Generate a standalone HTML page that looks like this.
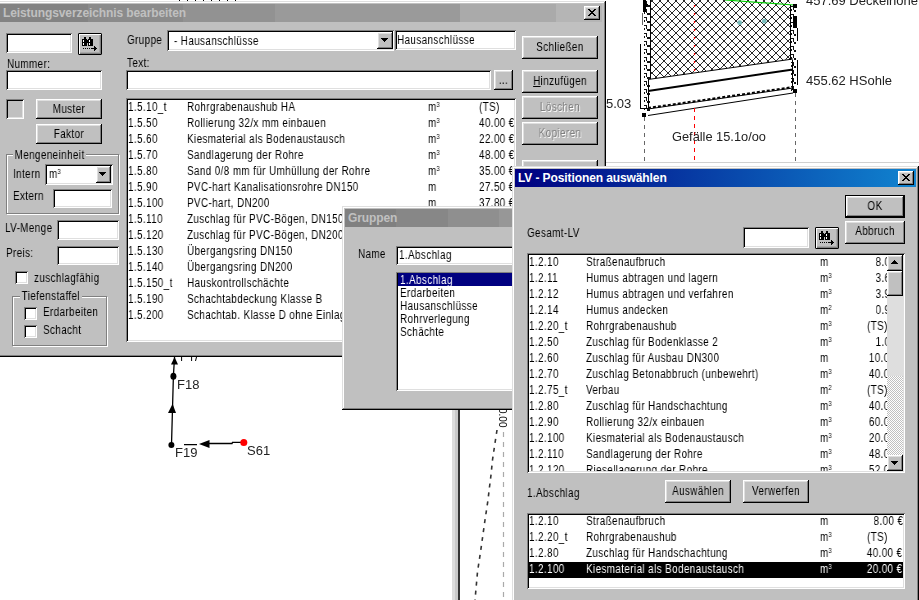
<!DOCTYPE html><html><head><meta charset="utf-8"><style>
*{margin:0;padding:0;box-sizing:border-box}
html,body{width:919px;height:600px;overflow:hidden;background:#fff}
body{position:relative;font-family:"Liberation Sans",sans-serif;font-size:11px;color:#000}
.a{position:absolute}
.t{position:absolute;white-space:pre;line-height:13px;font-size:12px;letter-spacing:0.5px;transform:scaleX(0.82);transform-origin:0 0;will-change:transform;color:#000}
.win{position:absolute;background:#c0c0c0;box-shadow:inset -1px -1px #000,inset 1px 1px #dfdfdf,inset -2px -2px #808080,inset 2px 2px #fff}
.sunk{position:absolute;background:#fff;box-shadow:inset 1px 1px #808080,inset -1px -1px #fff,inset 2px 2px #000,inset -2px -2px #dfdfdf}
.btn{position:absolute;background:#c0c0c0;box-shadow:inset -1px -1px #000,inset 1px 1px #fff,inset -2px -2px #808080,inset 2px 2px #dfdfdf}
.dbtn{position:absolute;background:#c0c0c0;border:1px solid #000;box-shadow:inset -1px -1px #000,inset 1px 1px #fff,inset -2px -2px #808080,inset 2px 2px #dfdfdf}
.cb{position:absolute;width:13px;height:13px;background:#fff;box-shadow:inset 1px 1px #808080,inset -1px -1px #fff,inset 2px 2px #000,inset -2px -2px #dfdfdf}
.grp{position:absolute;border:1px solid #808080;box-shadow:inset 1px 1px #fff,1px 1px #fff}
.ttl{position:absolute;height:18px;font-weight:bold;font-size:12px;line-height:18px;white-space:pre;letter-spacing:-0.1px;padding-left:3px;overflow:hidden}
.inact{color:#c0c0c0}
.act{color:#fff}
.cls{position:absolute;width:16px;height:14px;background:#c0c0c0;box-shadow:inset -1px -1px #000,inset 1px 1px #fff,inset -2px -2px #808080,inset 2px 2px #dfdfdf}
.dis{color:#808080;text-shadow:1px 1px #fff}
.lb{position:absolute;overflow:hidden}
.c{text-align:center;transform-origin:50% 0}
.s{font-size:7px;position:relative;top:-4px;margin-left:-0.3px}
</style></head><body><svg class="a" style="left:0;top:0" width="919" height="600"><defs><pattern id="hx" patternUnits="userSpaceOnUse" x="4" y="9" width="8" height="8"><g fill="#2a2a2a" shape-rendering="crispEdges"><rect x="0" y="0" width="1" height="1"/><rect x="7" y="0" width="1" height="1"/><rect x="1" y="1" width="1" height="1"/><rect x="6" y="1" width="1" height="1"/><rect x="2" y="2" width="1" height="1"/><rect x="5" y="2" width="1" height="1"/><rect x="3" y="3" width="1" height="1"/><rect x="4" y="3" width="1" height="1"/><rect x="4" y="4" width="1" height="1"/><rect x="3" y="4" width="1" height="1"/><rect x="5" y="5" width="1" height="1"/><rect x="2" y="5" width="1" height="1"/><rect x="6" y="6" width="1" height="1"/><rect x="1" y="6" width="1" height="1"/><rect x="7" y="7" width="1" height="1"/><rect x="0" y="7" width="1" height="1"/></g></pattern></defs><rect x="179" y="0" width="1" height="2" fill="#000"/><rect x="187" y="0" width="1" height="2" fill="#000"/><rect x="195" y="0" width="1" height="2" fill="#000"/><rect x="203" y="0" width="1" height="2" fill="#000"/><rect x="211" y="0" width="1" height="2" fill="#000"/><rect x="219" y="0" width="1" height="2" fill="#000"/><rect x="227" y="0" width="1" height="2" fill="#000"/><rect x="235" y="0" width="1" height="2" fill="#000"/><polygon points="650,0 790,0 790,59 650,79" fill="url(#hx)"/><line x1="725" y1="0" x2="794" y2="5" stroke="#0c0" stroke-width="1.2"/><line x1="648" y1="79.5" x2="793" y2="59" stroke="#000" stroke-width="1"/><line x1="648" y1="91" x2="793" y2="69.5" stroke="#000" stroke-width="2"/><line x1="648" y1="108" x2="793" y2="87" stroke="#000" stroke-width="2" stroke-dasharray="3,2"/><line x1="648" y1="109" x2="793" y2="88" stroke="#000" stroke-width="1"/><line x1="648" y1="115.5" x2="793" y2="93" stroke="#000" stroke-width="1"/><g fill="#111" shape-rendering="crispEdges"><rect x="644" y="1" width="3" height="1"/><rect x="646" y="2" width="1" height="3"/><rect x="644" y="4" width="1" height="2"/><rect x="647" y="5" width="3" height="2"/><rect x="644" y="9" width="3" height="1"/><rect x="646" y="10" width="1" height="3"/><rect x="644" y="12" width="1" height="2"/><rect x="647" y="13" width="3" height="2"/><rect x="644" y="17" width="3" height="1"/><rect x="646" y="18" width="1" height="3"/><rect x="644" y="20" width="1" height="2"/><rect x="647" y="21" width="3" height="2"/><rect x="644" y="25" width="3" height="1"/><rect x="646" y="26" width="1" height="3"/><rect x="644" y="28" width="1" height="2"/><rect x="647" y="29" width="3" height="2"/><rect x="644" y="33" width="3" height="1"/><rect x="646" y="34" width="1" height="3"/><rect x="644" y="36" width="1" height="2"/><rect x="647" y="37" width="3" height="2"/><rect x="644" y="41" width="3" height="1"/><rect x="646" y="42" width="1" height="3"/><rect x="644" y="44" width="1" height="2"/><rect x="647" y="45" width="3" height="2"/><rect x="644" y="49" width="3" height="1"/><rect x="646" y="50" width="1" height="3"/><rect x="644" y="52" width="1" height="2"/><rect x="647" y="53" width="3" height="2"/><rect x="644" y="57" width="3" height="1"/><rect x="646" y="58" width="1" height="3"/><rect x="644" y="60" width="1" height="2"/><rect x="647" y="61" width="3" height="2"/><rect x="644" y="65" width="3" height="1"/><rect x="646" y="66" width="1" height="3"/><rect x="644" y="68" width="1" height="2"/><rect x="647" y="69" width="3" height="2"/><rect x="644" y="73" width="3" height="1"/><rect x="646" y="74" width="1" height="3"/><rect x="644" y="76" width="1" height="2"/><rect x="647" y="77" width="3" height="2"/><rect x="644" y="81" width="3" height="1"/><rect x="646" y="82" width="1" height="3"/><rect x="644" y="84" width="1" height="2"/><rect x="647" y="85" width="3" height="2"/><rect x="644" y="89" width="3" height="1"/><rect x="646" y="90" width="1" height="3"/><rect x="644" y="92" width="1" height="2"/><rect x="647" y="93" width="3" height="2"/><rect x="644" y="97" width="3" height="1"/><rect x="646" y="98" width="1" height="3"/><rect x="644" y="100" width="1" height="2"/><rect x="647" y="101" width="3" height="2"/><rect x="644" y="105" width="3" height="1"/><rect x="646" y="106" width="1" height="3"/><rect x="644" y="108" width="1" height="2"/><rect x="647" y="109" width="3" height="2"/><rect x="791" y="6" width="3" height="1"/><rect x="793" y="7" width="1" height="3"/><rect x="791" y="9" width="1" height="2"/><rect x="794" y="10" width="2" height="2"/><rect x="791" y="14" width="3" height="1"/><rect x="793" y="15" width="1" height="3"/><rect x="791" y="17" width="1" height="2"/><rect x="794" y="18" width="2" height="2"/><rect x="791" y="22" width="3" height="1"/><rect x="793" y="23" width="1" height="3"/><rect x="791" y="25" width="1" height="2"/><rect x="794" y="26" width="2" height="2"/><rect x="791" y="30" width="3" height="1"/><rect x="793" y="31" width="1" height="3"/><rect x="791" y="33" width="1" height="2"/><rect x="794" y="34" width="2" height="2"/><rect x="791" y="38" width="3" height="1"/><rect x="793" y="39" width="1" height="3"/><rect x="791" y="41" width="1" height="2"/><rect x="794" y="42" width="2" height="2"/><rect x="791" y="46" width="3" height="1"/><rect x="793" y="47" width="1" height="3"/><rect x="791" y="49" width="1" height="2"/><rect x="794" y="50" width="2" height="2"/><rect x="791" y="54" width="3" height="1"/><rect x="793" y="55" width="1" height="3"/><rect x="791" y="57" width="1" height="2"/><rect x="794" y="58" width="2" height="2"/><rect x="791" y="62" width="3" height="1"/><rect x="793" y="63" width="1" height="3"/><rect x="791" y="65" width="1" height="2"/><rect x="794" y="66" width="2" height="2"/><rect x="791" y="70" width="3" height="1"/><rect x="793" y="71" width="1" height="3"/><rect x="791" y="73" width="1" height="2"/><rect x="794" y="74" width="2" height="2"/><rect x="791" y="78" width="3" height="1"/><rect x="793" y="79" width="1" height="3"/><rect x="791" y="81" width="1" height="2"/><rect x="794" y="82" width="2" height="2"/><rect x="791" y="86" width="3" height="1"/><rect x="793" y="87" width="1" height="3"/><rect x="791" y="89" width="1" height="2"/><rect x="794" y="90" width="2" height="2"/></g><g fill="#000" shape-rendering="crispEdges"><path d="M643 0h3v4l2 0l-2 4h-3zM643 7h3v5h-3z"/><rect x="642" y="13" width="1" height="12" fill="#666"/><rect x="650" y="0" width="1" height="79"/><rect x="790" y="5" width="1" height="55"/><rect x="647.5" y="79" width="1.3" height="30"/><rect x="640" y="44" width="1" height="65"/><rect x="640" y="108" width="8" height="1"/><rect x="642" y="113" width="4" height="4"/><rect x="793" y="4" width="4" height="4"/><rect x="793" y="89" width="4" height="4"/><rect x="793" y="16" width="4" height="12"/><rect x="797" y="28" width="1" height="13"/><rect x="797" y="60" width="1" height="25"/><rect x="792" y="60" width="1" height="30"/></g><line x1="694.5" y1="5" x2="694.5" y2="72" stroke="#f00" stroke-width="1.2" stroke-dasharray="2,6"/><line x1="694.5" y1="108" x2="694.5" y2="162" stroke="#f00" stroke-width="1" stroke-dasharray="4,4"/><line x1="644.5" y1="117" x2="644.5" y2="162" stroke="#666" stroke-width="1" stroke-dasharray="4,4"/><line x1="795.5" y1="93" x2="795.5" y2="162" stroke="#666" stroke-width="1" stroke-dasharray="4,4"/><circle cx="739.7" cy="22.7" r="2.4" fill="#7bb"/><circle cx="764.3" cy="21.2" r="2.4" fill="#7bb"/><rect x="606" y="162" width="313" height="1" fill="#d0d0d0"/><path d="M174.6 356L173.4 376L171.5 445" stroke="#000" stroke-width="1.3" fill="none"/><path d="M184 444.6H197M209 443.5H232L232.5 442.4H243" stroke="#000" stroke-width="1.3" fill="none"/><ellipse cx="173.4" cy="376.3" rx="3" ry="3.5" fill="#000"/><circle cx="171.4" cy="445.1" r="3" fill="#000"/><circle cx="243.8" cy="442.4" r="3.5" fill="#f00"/><path d="M172.6 403.7L168 413H176z" fill="#000"/><path d="M199 444L209.5 440V448z" fill="#000"/><path d="M174.6 357L171 364.6H178z" fill="#000"/><path d="M181.6 357V361M191.6 357V361M196.5 357L195.5 361" stroke="#000" stroke-width="1"/><rect x="452" y="405" width="3" height="195" fill="#dcdcdc"/><rect x="455" y="405" width="3" height="195" fill="#c8c8c8"/><rect x="458" y="405" width="2" height="195" fill="#333"/><path d="M497 430L494.7 445L492.5 460L491 475L489.5 487L488 500L485 520L480.8 550L477.5 572L475 600" stroke="#333" stroke-width="1.6" fill="none" stroke-dasharray="4,5"/><line x1="503.5" y1="432" x2="503.5" y2="600" stroke="#aaa" stroke-width="1.2" stroke-dasharray="5,5"/></svg>
<div class="t" style="left:606px;top:96px;font-size:13px;letter-spacing:0;line-height:15px;color:#222;transform:none">5.03</div>
<div class="t" style="left:672px;top:129px;font-size:13px;letter-spacing:0;line-height:15px;color:#222;transform:none;font-size:12.8px">Gefälle 15.1o/oo</div>
<div class="t" style="left:806px;top:-7px;font-size:13px;letter-spacing:0;line-height:15px;color:#222;transform:none">457.69 Deckelhöhe</div>
<div class="t" style="left:806px;top:73px;font-size:13px;letter-spacing:0;line-height:15px;color:#222;transform:none">455.62 HSohle</div>
<div class="t" style="left:176.5px;top:377px;font-size:13px;letter-spacing:0;line-height:15px;color:#222;transform:none">F18</div>
<div class="t" style="left:175px;top:445px;font-size:13px;letter-spacing:0;line-height:15px;color:#222;transform:none">F19</div>
<div class="t" style="left:247px;top:443px;font-size:13px;letter-spacing:0;line-height:15px;color:#222;transform:none">S61</div>
<div class="t" style="left:508px;top:408px;font-size:10px;line-height:11px;letter-spacing:0;transform:rotate(90deg);transform-origin:0 0">0.00</div>
<div class="win" style="left:-3px;top:1px;width:609px;height:356px;"></div>
<div class="ttl inact" style="left:0;top:4px;width:602px;background:linear-gradient(90deg,#838383 0px,#838383 88px,#8b8b8b 88px,#8b8b8b 183px,#929292 183px,#929292 275px,#9a9a9a 275px,#9a9a9a 460px,#aaaaaa 460px,#aaaaaa 556px,#b5b5b5 556px)">Leistungsverzeichnis bearbeiten</div>
<div class="cls" style="left:584px;top:6px"><svg width="16" height="14" style="position:absolute;left:0;top:0" shape-rendering="crispEdges"><path d="M4 3h2v1h1v1h2v-1h1v-1h2v1h-1v1h-1v1h-1v1h1v1h1v1h1v1h-2v-1h-1v-1h-2v1h-1v1h-2v-1h1v-1h1v-1h1v-1h-1v-1h-1v-1h-1z" fill="#000"/></svg></div>
<div class="sunk" style="left:6px;top:33px;width:66px;height:20px;"></div>
<div class="a" style="left:78px;top:33px;width:24px;height:22px;background:#c0c0c0;border:1px solid #000;border-radius:1px;box-shadow:inset 1px 1px #fff,inset -1px -1px #808080,inset -2px -2px #a8a8a8"><svg width="24" height="22" style="position:absolute;left:-1px;top:-1px" shape-rendering="crispEdges"><g fill="#000"><rect x="6" y="4" width="2" height="2"/><rect x="11" y="4" width="2" height="2"/><rect x="4" y="6" width="5" height="7"/><rect x="10" y="6" width="5" height="7"/><rect x="8" y="7" width="3" height="3"/><rect x="5" y="15" width="1" height="1"/><rect x="7" y="15" width="1" height="1"/><rect x="9" y="15" width="1" height="1"/><rect x="11" y="15" width="1" height="1"/><rect x="13" y="15" width="4" height="1"/><path d="M16 13L19 15.5L16 18z"/></g><g fill="#fff"><rect x="5" y="7" width="1" height="2"/><rect x="5" y="10" width="1" height="2"/><rect x="11" y="7" width="1" height="2"/><rect x="11" y="10" width="1" height="2"/></g></svg></div>
<div class="t " style="left:7px;top:58px;">Nummer:</div>
<div class="sunk" style="left:6px;top:70px;width:96px;height:20px;"></div>
<div class="sunk" style="left:6px;top:99px;width:18px;height:20px;background:#c0c0c0"></div>
<div class="btn" style="left:36px;top:99px;width:66px;height:20px;"><div class="t c" style="left:0;width:66px;top:4px">Muster</div></div>
<div class="btn" style="left:36px;top:124px;width:66px;height:20px;"><div class="t c" style="left:0;width:66px;top:4px">Faktor</div></div>
<div class="grp" style="left:6px;top:154px;width:113px;height:60px;"></div>
<div class="t" style="left:13px;top:149px;background:#c0c0c0;padding:0 2px">Mengeneinheit</div>
<div class="t " style="left:13px;top:168px;">Intern</div>
<div class="sunk" style="left:45px;top:164px;width:68px;height:21px;"></div>
<div class="t " style="left:49px;top:168px;">m<span class="s">3</span></div>
<div class="btn" style="left:96px;top:166px;width:15px;height:17px"><svg width="15" height="17" style="position:absolute;left:0;top:0" shape-rendering="crispEdges"><path d="M3 6h7l-3.5 4z" fill="#000"/></svg></div>
<div class="t " style="left:13px;top:190px;">Extern</div>
<div class="sunk" style="left:53px;top:189px;width:59px;height:19px;"></div>
<div class="t " style="left:5px;top:222px;">LV-Menge</div>
<div class="sunk" style="left:57px;top:220px;width:62px;height:20px;"></div>
<div class="t " style="left:6px;top:247px;">Preis:</div>
<div class="sunk" style="left:57px;top:246px;width:62px;height:19px;"></div>
<div class="cb" style="left:15px;top:271px"></div>
<div class="t " style="left:34px;top:272px;">zuschlagfähig</div>
<div class="grp" style="left:12px;top:296px;width:95px;height:50px;"></div>
<div class="t" style="left:20px;top:290px;background:#c0c0c0;padding:0 2px">Tiefenstaffel</div>
<div class="cb" style="left:24px;top:307px"></div>
<div class="t " style="left:43px;top:306px;">Erdarbeiten</div>
<div class="cb" style="left:24px;top:325px"></div>
<div class="t " style="left:43px;top:324px;">Schacht</div>
<div class="t " style="left:127px;top:34px;">Gruppe</div>
<div class="sunk" style="left:167px;top:30px;width:227px;height:21px;"></div>
<div class="t " style="left:174px;top:35px;">- Hausanschlüsse</div>
<div class="btn" style="left:377px;top:32px;width:16px;height:17px"><svg width="16" height="17" style="position:absolute;left:0;top:0" shape-rendering="crispEdges"><path d="M4 6h7l-3.5 4z" fill="#000"/></svg></div>
<div class="sunk" style="left:395px;top:30px;width:121px;height:20px;"></div>
<div class="t " style="left:397px;top:34px;">Hausanschlüsse</div>
<div class="t " style="left:127px;top:57px;">Text:</div>
<div class="sunk" style="left:126px;top:70px;width:365px;height:20px;"></div>
<div class="btn" style="left:494px;top:70px;width:19px;height:20px;"><div class="t c" style="left:0;width:19px;top:4px">...</div></div>
<div class="sunk" style="left:126px;top:98px;width:390px;height:244px;"><div class="lb" style="left:2px;top:2px;width:386px;height:240px"><div class="a" style="left:-2px;top:-2px"><div class="t" style="left:2px;top:3px">1.5.10_t</div><div class="t" style="left:61px;top:3px">Rohrgrabenaushub HA</div><div class="t" style="left:302px;top:3px">m<span class="s">3</span></div><div class="t" style="left:353px;top:3px">(TS)</div><div class="t" style="left:2px;top:19px">1.5.50</div><div class="t" style="left:61px;top:19px">Rollierung 32/x mm einbauen</div><div class="t" style="left:302px;top:19px">m<span class="s">3</span></div><div class="t" style="left:353px;top:19px">40.00 €</div><div class="t" style="left:2px;top:35px">1.5.60</div><div class="t" style="left:61px;top:35px">Kiesmaterial als Bodenaustausch</div><div class="t" style="left:302px;top:35px">m<span class="s">3</span></div><div class="t" style="left:353px;top:35px">22.00 €</div><div class="t" style="left:2px;top:51px">1.5.70</div><div class="t" style="left:61px;top:51px">Sandlagerung der Rohre</div><div class="t" style="left:302px;top:51px">m<span class="s">3</span></div><div class="t" style="left:353px;top:51px">48.00 €</div><div class="t" style="left:2px;top:67px">1.5.80</div><div class="t" style="left:61px;top:67px">Sand 0/8 mm für Umhüllung der Rohre</div><div class="t" style="left:302px;top:67px">m<span class="s">3</span></div><div class="t" style="left:353px;top:67px">35.00 €</div><div class="t" style="left:2px;top:83px">1.5.90</div><div class="t" style="left:61px;top:83px">PVC-hart Kanalisationsrohre DN150</div><div class="t" style="left:302px;top:83px">m</div><div class="t" style="left:353px;top:83px">27.50 €</div><div class="t" style="left:2px;top:99px">1.5.100</div><div class="t" style="left:61px;top:99px">PVC-hart, DN200</div><div class="t" style="left:302px;top:99px">m</div><div class="t" style="left:353px;top:99px">37.80 €</div><div class="t" style="left:2px;top:115px">1.5.110</div><div class="t" style="left:61px;top:115px">Zuschlag für PVC-Bögen, DN150</div><div class="t" style="left:2px;top:131px">1.5.120</div><div class="t" style="left:61px;top:131px">Zuschlag für PVC-Bögen, DN200</div><div class="t" style="left:2px;top:147px">1.5.130</div><div class="t" style="left:61px;top:147px">Übergangsring DN150</div><div class="t" style="left:2px;top:163px">1.5.140</div><div class="t" style="left:61px;top:163px">Übergangsring DN200</div><div class="t" style="left:2px;top:179px">1.5.150_t</div><div class="t" style="left:61px;top:179px">Hauskontrollschächte</div><div class="t" style="left:2px;top:195px">1.5.190</div><div class="t" style="left:61px;top:195px">Schachtabdeckung Klasse B</div><div class="t" style="left:2px;top:211px">1.5.200</div><div class="t" style="left:61px;top:211px">Schachtab. Klasse D ohne Einlage</div></div></div></div>
<div class="btn" style="left:522px;top:36px;width:76px;height:23px;"><div class="t c" style="left:0;width:76px;top:5px">Schließen</div></div>
<div class="btn" style="left:522px;top:70px;width:76px;height:23px;"><div class="t c" style="left:0;width:76px;top:5px"><u>H</u>inzufügen</div></div>
<div class="btn" style="left:522px;top:96px;width:76px;height:23px;"><div class="t c dis" style="left:0;width:76px;top:5px">Löschen</div></div>
<div class="btn" style="left:522px;top:122px;width:76px;height:23px;"><div class="t c dis" style="left:0;width:76px;top:5px">Kopieren</div></div>
<div class="btn" style="left:522px;top:160px;width:76px;height:23px;"></div>
<div class="win" style="left:342px;top:206px;width:200px;height:204px;"></div>
<div class="ttl inact" style="left:345px;top:209px;width:190px;background:linear-gradient(90deg,#808080 0px,#808080 51px,#878787 51px,#878787 103px,#8f8f8f 103px,#8f8f8f 154px,#979797 154px)">Gruppen</div>
<div class="t " style="left:358px;top:248px;">Name</div>
<div class="sunk" style="left:396px;top:246px;width:140px;height:19px;"></div>
<div class="t " style="left:399px;top:249px;">1.Abschlag</div>
<div class="sunk" style="left:396px;top:272px;width:140px;height:119px;"><div class="a" style="left:2px;top:1px;width:140px;height:13px;background:#000080"></div><div class="t" style="left:4px;top:2px;color:#fff;">1.Abschlag</div><div class="t" style="left:4px;top:15px;">Erdarbeiten</div><div class="t" style="left:4px;top:28px;">Hausanschlüsse</div><div class="t" style="left:4px;top:41px;">Rohrverlegung</div><div class="t" style="left:4px;top:54px;">Schächte</div></div>
<div class="win" style="left:512px;top:166px;width:407px;height:450px;"></div>
<div class="ttl act" style="left:515px;top:169px;width:401px;background:linear-gradient(90deg,#000080,#1084d0)">LV - Positionen auswählen</div>
<div class="cls" style="left:898px;top:171px"><svg width="16" height="14" style="position:absolute;left:0;top:0" shape-rendering="crispEdges"><path d="M4 3h2v1h1v1h2v-1h1v-1h2v1h-1v1h-1v1h-1v1h1v1h1v1h1v1h-2v-1h-1v-1h-2v1h-1v1h-2v-1h1v-1h1v-1h1v-1h-1v-1h-1v-1h-1z" fill="#000"/></svg></div>
<div class="dbtn" style="left:845px;top:195px;width:60px;height:23px;"><div class="t c" style="left:0;width:58px;top:4px">OK</div></div>
<div class="btn" style="left:845px;top:221px;width:60px;height:23px;"><div class="t c" style="left:0;width:60px;top:4px">Abbruch</div></div>
<div class="t " style="left:527px;top:227px;">Gesamt-LV</div>
<div class="sunk" style="left:743px;top:227px;width:66px;height:21px;"></div>
<div class="a" style="left:815px;top:227px;width:24px;height:22px;background:#c0c0c0;border:1px solid #000;border-radius:1px;box-shadow:inset 1px 1px #fff,inset -1px -1px #808080,inset -2px -2px #a8a8a8"><svg width="24" height="22" style="position:absolute;left:-1px;top:-1px" shape-rendering="crispEdges"><g fill="#000"><rect x="6" y="4" width="2" height="2"/><rect x="11" y="4" width="2" height="2"/><rect x="4" y="6" width="5" height="7"/><rect x="10" y="6" width="5" height="7"/><rect x="8" y="7" width="3" height="3"/><rect x="5" y="15" width="1" height="1"/><rect x="7" y="15" width="1" height="1"/><rect x="9" y="15" width="1" height="1"/><rect x="11" y="15" width="1" height="1"/><rect x="13" y="15" width="4" height="1"/><path d="M16 13L19 15.5L16 18z"/></g><g fill="#fff"><rect x="5" y="7" width="1" height="2"/><rect x="5" y="10" width="1" height="2"/><rect x="11" y="7" width="1" height="2"/><rect x="11" y="10" width="1" height="2"/></g></svg></div>
<div class="sunk" style="left:527px;top:253px;width:378px;height:220px;"><div class="lb" style="left:2px;top:2px;width:358px;height:216px"><div class="a" style="left:-2px;top:-2px;width:378px;height:300px"><div class="t" style="left:2px;top:2.5px;">1.2.10</div><div class="t" style="left:59px;top:2.5px;">Straßenaufbruch</div><div class="t" style="left:293px;top:2.5px;">m</div><div class="t" style="right:0px;top:2.5px;text-align:right;transform-origin:100% 0;">8.00 €</div><div class="t" style="left:2px;top:18.5px;">1.2.11</div><div class="t" style="left:59px;top:18.5px;">Humus abtragen und lagern</div><div class="t" style="left:293px;top:18.5px;">m<span class="s">3</span></div><div class="t" style="right:0px;top:18.5px;text-align:right;transform-origin:100% 0;">3.60 €</div><div class="t" style="left:2px;top:34.5px;">1.2.12</div><div class="t" style="left:59px;top:34.5px;">Humus abtragen und verfahren</div><div class="t" style="left:293px;top:34.5px;">m<span class="s">3</span></div><div class="t" style="right:0px;top:34.5px;text-align:right;transform-origin:100% 0;">3.90 €</div><div class="t" style="left:2px;top:50.5px;">1.2.14</div><div class="t" style="left:59px;top:50.5px;">Humus andecken</div><div class="t" style="left:293px;top:50.5px;">m<span class="s">2</span></div><div class="t" style="right:0px;top:50.5px;text-align:right;transform-origin:100% 0;">0.90 €</div><div class="t" style="left:2px;top:66.5px;">1.2.20_t</div><div class="t" style="left:59px;top:66.5px;">Rohrgrabenaushub</div><div class="t" style="left:293px;top:66.5px;">m<span class="s">3</span></div><div class="t" style="left:340px;top:66.5px;">(TS)  </div><div class="t" style="left:2px;top:82.5px;">1.2.50</div><div class="t" style="left:59px;top:82.5px;">Zuschlag für Bodenklasse 2</div><div class="t" style="left:293px;top:82.5px;">m<span class="s">3</span></div><div class="t" style="right:0px;top:82.5px;text-align:right;transform-origin:100% 0;">1.00 €</div><div class="t" style="left:2px;top:98.5px;">1.2.60</div><div class="t" style="left:59px;top:98.5px;">Zuschlag für Ausbau DN300</div><div class="t" style="left:293px;top:98.5px;">m</div><div class="t" style="right:0px;top:98.5px;text-align:right;transform-origin:100% 0;">10.00 €</div><div class="t" style="left:2px;top:114.5px;">1.2.70</div><div class="t" style="left:59px;top:114.5px;">Zuschlag Betonabbruch (unbewehrt)</div><div class="t" style="left:293px;top:114.5px;">m<span class="s">3</span></div><div class="t" style="right:0px;top:114.5px;text-align:right;transform-origin:100% 0;">40.00 €</div><div class="t" style="left:2px;top:130.5px;">1.2.75_t</div><div class="t" style="left:59px;top:130.5px;">Verbau</div><div class="t" style="left:293px;top:130.5px;">m<span class="s">2</span></div><div class="t" style="left:340px;top:130.5px;">(TS)  </div><div class="t" style="left:2px;top:146.5px;">1.2.80</div><div class="t" style="left:59px;top:146.5px;">Zuschlag für Handschachtung</div><div class="t" style="left:293px;top:146.5px;">m<span class="s">3</span></div><div class="t" style="right:0px;top:146.5px;text-align:right;transform-origin:100% 0;">40.00 €</div><div class="t" style="left:2px;top:162.5px;">1.2.90</div><div class="t" style="left:59px;top:162.5px;">Rollierung 32/x einbauen</div><div class="t" style="left:293px;top:162.5px;">m<span class="s">3</span></div><div class="t" style="right:0px;top:162.5px;text-align:right;transform-origin:100% 0;">60.00 €</div><div class="t" style="left:2px;top:178.5px;">1.2.100</div><div class="t" style="left:59px;top:178.5px;">Kiesmaterial als Bodenaustausch</div><div class="t" style="left:293px;top:178.5px;">m<span class="s">3</span></div><div class="t" style="right:0px;top:178.5px;text-align:right;transform-origin:100% 0;">20.00 €</div><div class="t" style="left:2px;top:194.5px;">1.2.110</div><div class="t" style="left:59px;top:194.5px;">Sandlagerung der Rohre</div><div class="t" style="left:293px;top:194.5px;">m<span class="s">3</span></div><div class="t" style="right:0px;top:194.5px;text-align:right;transform-origin:100% 0;">48.00 €</div><div class="t" style="left:2px;top:210.5px;">1.2.120</div><div class="t" style="left:59px;top:210.5px;">Riesellagerung der Rohre</div><div class="t" style="left:293px;top:210.5px;">m<span class="s">3</span></div><div class="t" style="right:0px;top:210.5px;text-align:right;transform-origin:100% 0;">52.00 €</div></div></div><div class="a" style="left:360px;top:2px;width:16px;height:216px;background:repeating-conic-gradient(#fff 0 25%,#c0c0c0 0 50%) 0 0/2px 2px"></div><div class="btn" style="left:360px;top:2px;width:16px;height:16px"><svg width="16" height="16" class="a" style="left:0;top:0" shape-rendering="crispEdges"><path d="M4 9h7l-3.5-4z" fill="#000"/></svg></div><div class="btn" style="left:360px;top:18px;width:16px;height:25px"></div><div class="a" style="left:360px;top:43px;width:16px;height:80px;background:#dedede"></div><div class="btn" style="left:360px;top:202px;width:16px;height:16px"><svg width="16" height="16" class="a" style="left:0;top:0" shape-rendering="crispEdges"><path d="M4 6h7l-3.5 4z" fill="#000"/></svg></div></div>
<div class="t " style="left:527px;top:487px;">1.Abschlag</div>
<div class="btn" style="left:665px;top:480px;width:66px;height:23px;"><div class="t c" style="left:0;width:66px;top:5px">Auswählen</div></div>
<div class="btn" style="left:743px;top:480px;width:66px;height:23px;"><div class="t c" style="left:0;width:66px;top:5px">Verwerfen</div></div>
<div class="sunk" style="left:527px;top:513px;width:378px;height:76px;"><div class="lb" style="left:2px;top:2px;width:374px;height:72px"><div class="a" style="left:-2px;top:-2px;width:376px;height:80px"><div class="t" style="left:2px;top:2px;">1.2.10</div><div class="t" style="left:59px;top:2px;">Straßenaufbruch</div><div class="t" style="left:293px;top:2px;">m</div><div class="t" style="right:0px;top:2px;text-align:right;transform-origin:100% 0;">8.00 €</div><div class="t" style="left:2px;top:18px;">1.2.20_t</div><div class="t" style="left:59px;top:18px;">Rohrgrabenaushub</div><div class="t" style="left:293px;top:18px;">m<span class="s">3</span></div><div class="t" style="left:340px;top:18px;">(TS)  </div><div class="t" style="left:2px;top:34px;">1.2.80</div><div class="t" style="left:59px;top:34px;">Zuschlag für Handschachtung</div><div class="t" style="left:293px;top:34px;">m<span class="s">3</span></div><div class="t" style="right:0px;top:34px;text-align:right;transform-origin:100% 0;">40.00 €</div><div class="a" style="left:2px;top:49px;width:376px;height:16px;background:#000"></div><div class="t" style="left:2px;top:50px;color:#fff;">1.2.100</div><div class="t" style="left:59px;top:50px;color:#fff;">Kiesmaterial als Bodenaustausch</div><div class="t" style="left:293px;top:50px;color:#fff;">m<span class="s">3</span></div><div class="t" style="right:0px;top:50px;text-align:right;transform-origin:100% 0;color:#fff;">20.00 €</div></div></div></div></body></html>
